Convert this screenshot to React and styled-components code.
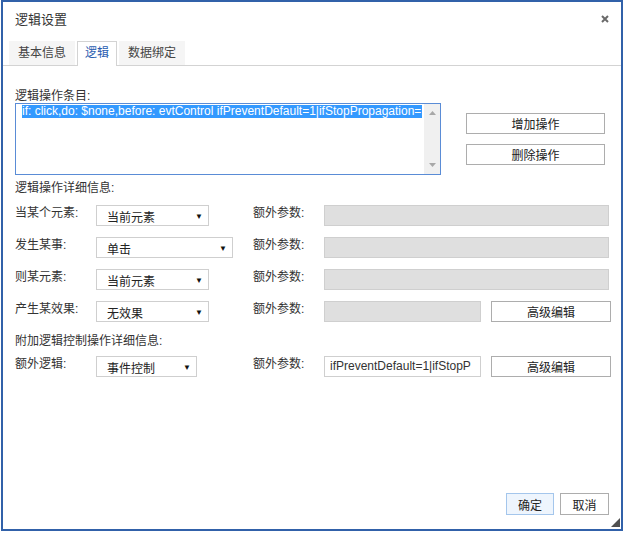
import React from 'react';
import styled, { createGlobalStyle } from 'styled-components';

const GlobalStyle = createGlobalStyle`
  html, body {
    margin: 0;
    padding: 0;
    background: #fff;
  }
  body {
    font-family: 'Liberation Sans', 'Noto Sans CJK SC', sans-serif;
    font-size: 12px;
    color: #333;
  }
  * {
    box-sizing: border-box;
  }
`;

const theme = {
  frame: '#3161a9',
  line: '#d3d3d3',
  field: '#cfcfcf',
  fieldGray: '#dfdfdf',
  button: '#adadad',
  text: '#333',
  activeTab: '#2a5db0',
  select: '#3399ff'
};

const ArrowDown = () => <Caret>▼</Caret>;

const App = () => {
  return (
    <>
      <GlobalStyle />
      <Dialog>
        <Header>
          <Title>逻辑设置</Title>
          <CloseIcon viewBox="0 0 8 8">
            <path d="M1 1 L7 7 M7 1 L1 7" stroke="#6a6a6a" strokeWidth="2" />
          </CloseIcon>
        </Header>

        <TabBar>
          <Tab>基本信息</Tab>
          <Tab $active>逻辑</Tab>
          <Tab>数据绑定</Tab>
        </TabBar>

        <Body>
          <Caption>逻辑操作条目:</Caption>
          <ListRow>
            <ListBox>
              <ListItems>
                <ListItem>
                  <Selected>if: click,do: $none,before: evtControl ifPreventDefault=1|ifStopPropagation=1</Selected>
                </ListItem>
              </ListItems>
              <ScrollBar>
                <svg width="7" height="4" viewBox="0 0 7 4"><polygon points="3.5,0 7,4 0,4" fill="#a8a8a8" /></svg>
                <svg width="7" height="4" viewBox="0 0 7 4"><polygon points="0,0 7,0 3.5,4" fill="#a8a8a8" /></svg>
              </ScrollBar>
            </ListBox>
            <ActionColumn>
              <Btn $w={139}>增加操作</Btn>
              <Btn $w={139}>删除操作</Btn>
            </ActionColumn>
          </ListRow>

          <Caption $top={6}>逻辑操作详细信息:</Caption>
          <Rows $top={10}>
            <Row>
              <Label>当某个元素:</Label>
              <Select $w={113}>当前元素<ArrowDown /></Select>
              <Label>额外参数:</Label>
              <Input $w={285} $gray />
            </Row>
            <Row>
              <Label>发生某事:</Label>
              <Select $w={137}>单击<ArrowDown /></Select>
              <Label>额外参数:</Label>
              <Input $w={285} $gray />
            </Row>
            <Row>
              <Label>则某元素:</Label>
              <Select $w={113}>当前元素<ArrowDown /></Select>
              <Label>额外参数:</Label>
              <Input $w={285} $gray />
            </Row>
            <Row>
              <Label>产生某效果:</Label>
              <Select $w={113}>无效果<ArrowDown /></Select>
              <Label>额外参数:</Label>
              <ValueCell>
                <Input $w={157} $gray />
                <Btn $w={120}>高级编辑</Btn>
              </ValueCell>
            </Row>
          </Rows>

          <Caption $top={12}>附加逻辑控制操作详细信息:</Caption>
          <Rows $top={8}>
            <Row>
              <Label>额外逻辑:</Label>
              <Select $w={101}>事件控制<ArrowDown /></Select>
              <Label>额外参数:</Label>
              <ValueCell>
                <Input $w={157}>ifPreventDefault=1|ifStopP</Input>
                <Btn $w={120}>高级编辑</Btn>
              </ValueCell>
            </Row>
          </Rows>
        </Body>

        <Footer>
          <Btn $w={48} $h={22} $primary>确定</Btn>
          <Btn $w={49} $h={22}>取消</Btn>
        </Footer>

        <Grip viewBox="0 0 9 9">
          <polygon points="9,0 9,9 0,9" fill="#505050" />
        </Grip>
      </Dialog>
    </>
  );
};

const Dialog = styled.div`
  position: relative;
  width: 622px;
  height: 531px;
  margin-left: 1px;
  border: 2px solid ${theme.frame};
  box-shadow: 0 2px 0 #c3d3ea;
  background: #fff;
  display: flex;
  flex-direction: column;
`;

const Header = styled.div`
  height: 39px;
  padding: 9px 12px 0 12px;
  display: flex;
  justify-content: space-between;
  align-items: flex-start;
`;

const Title = styled.div`
  font-size: 13px;
  line-height: 17px;
  color: #333;
`;

const CloseIcon = styled.svg`
  width: 8px;
  height: 8px;
  margin-top: 4px;
`;

const TabBar = styled.div`
  display: flex;
  gap: 2px;
  height: 25px;
  padding-left: 6px;
  border-bottom: 1px solid ${theme.line};
`;

const Tab = styled.div`
  height: ${p => (p.$active ? '25px' : '24px')};
  line-height: ${p => (p.$active ? '23px' : '24px')};
  padding: 0 ${p => (p.$active ? '7px' : '9px')};
  background: ${p => (p.$active ? '#fff' : '#f5f5f5')};
  color: ${p => (p.$active ? theme.activeTab : '#444')};
  border: ${p => (p.$active ? `1px solid ${theme.line}` : 'none')};
  border-bottom: none;
  font-size: 12px;
`;

const Body = styled.div`
  padding: 23px 10px 0 12px;
`;

const Caption = styled.div`
  line-height: 14px;
  margin-top: ${p => p.$top || 0}px;
  color: #333;
`;

const ListRow = styled.div`
  display: flex;
  align-items: flex-start;
`;

const ListBox = styled.div`
  width: 426px;
  height: 72px;
  border: 1px solid #5a8cd6;
  display: flex;
`;

const ListItems = styled.div`
  flex: 1;
  min-width: 0;
  padding: 1px 2px 0 6px;
  overflow: hidden;
`;

const ListItem = styled.div`
  white-space: nowrap;
  overflow: hidden;
  line-height: 13px;
`;

const Selected = styled.span`
  background: ${theme.select};
  color: #fff;
`;

const ScrollBar = styled.div`
  width: 16px;
  background: #f0f0f0;
  display: flex;
  flex-direction: column;
  justify-content: space-between;
  align-items: center;
  padding: 7px 0;
`;

const ActionColumn = styled.div`
  margin-left: 25px;
  padding-top: 10px;
  display: flex;
  flex-direction: column;
  gap: 10px;
`;

const Btn = styled.button`
  width: ${p => p.$w}px;
  height: ${p => p.$h || 21}px;
  padding: 0;
  font: inherit;
  font-size: 12px;
  color: #222;
  background: ${p => (p.$primary ? '#eef5fd' : '#fff')};
  border: 1px solid ${p => (p.$primary ? '#a4c6ec' : theme.button)};
  border-radius: 0;
`;

const Rows = styled.div`
  margin-top: ${p => p.$top || 0}px;
  display: flex;
  flex-direction: column;
  gap: 11px;
`;

const Row = styled.div`
  display: grid;
  grid-template-columns: 81px 157px 71px auto;
  align-items: start;
  height: 21px;
`;

const Label = styled.div`
  line-height: 16px;
  color: #333;
  white-space: nowrap;
`;

const Select = styled.div`
  width: ${p => p.$w}px;
  height: 21px;
  border: 1px solid ${theme.field};
  background: #fff;
  padding: 1px 0 0 10px;
  display: flex;
  justify-content: space-between;
  align-items: center;
  color: #222;
`;

const Caret = styled.span`
  font-size: 8px;
  margin-right: 5px;
  color: #111;
`;

const Input = styled.div`
  width: ${p => p.$w}px;
  height: 21px;
  border: 1px solid ${theme.field};
  background: ${p => (p.$gray ? theme.fieldGray : '#fff')};
  padding: 0 0 0 5px;
  line-height: 19px;
  white-space: nowrap;
  overflow: hidden;
  color: #333;
`;

const ValueCell = styled.div`
  display: flex;
  gap: 10px;
`;

const Footer = styled.div`
  margin-top: auto;
  display: flex;
  justify-content: flex-end;
  gap: 6px;
  padding: 0 12px 14px 0;
`;

const Grip = styled.svg`
  position: absolute;
  right: 1px;
  bottom: 2px;
  width: 9px;
  height: 9px;
`;

export default App;
